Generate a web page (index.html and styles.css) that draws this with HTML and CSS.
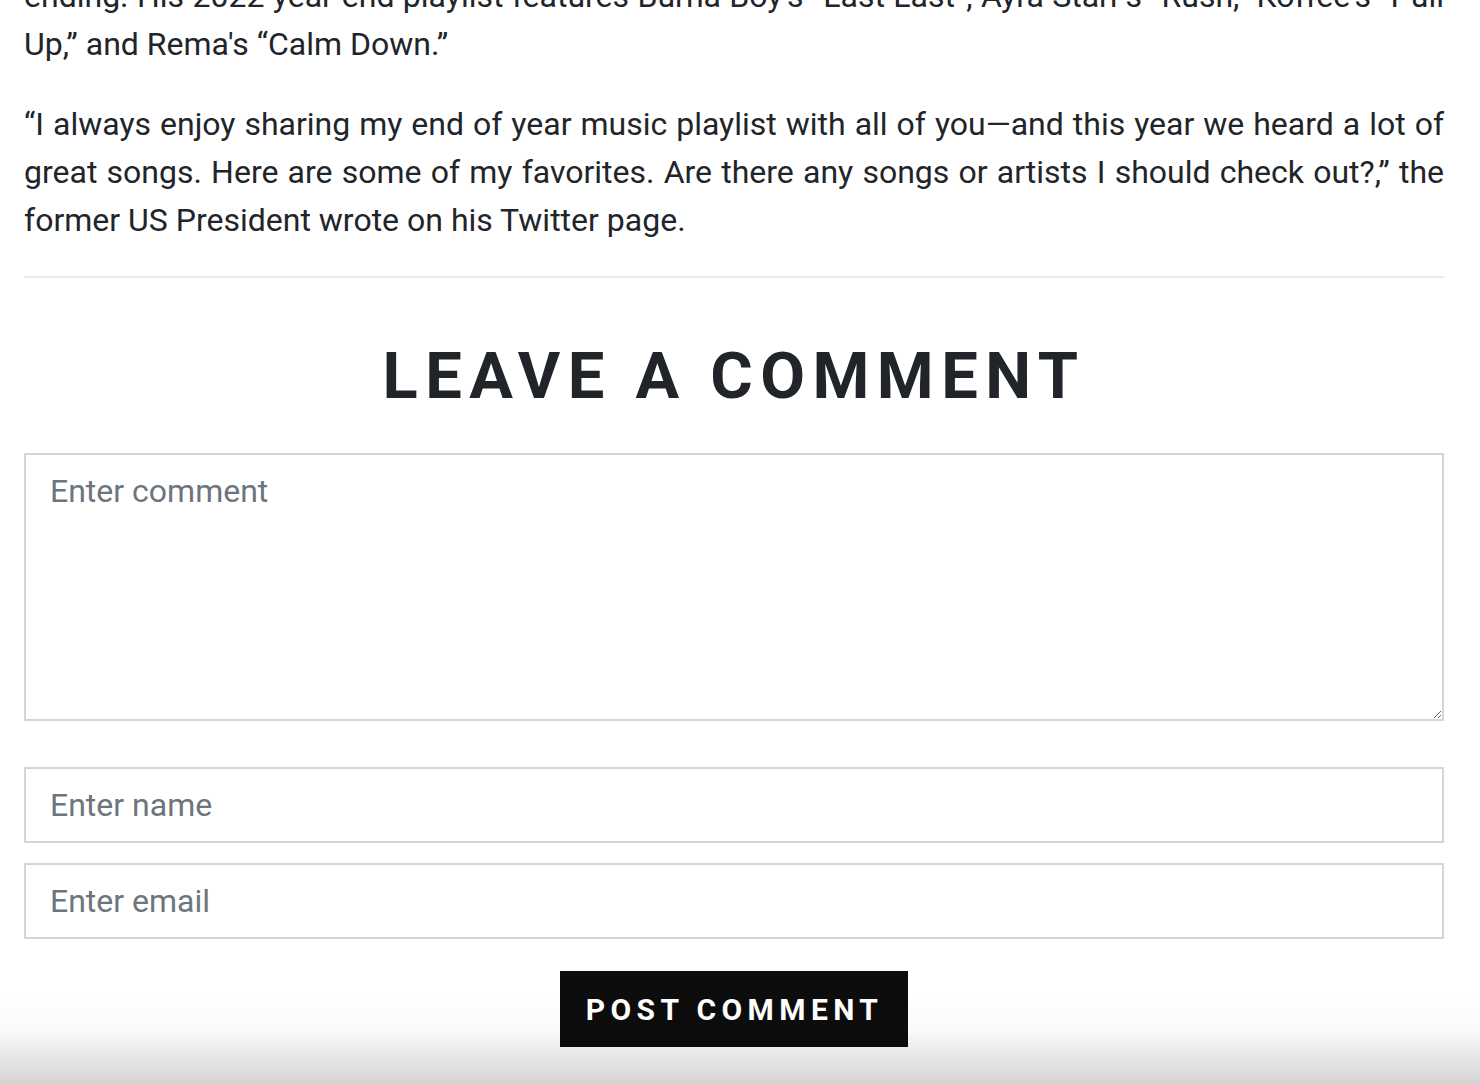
FILE: index.html
```html
<!DOCTYPE html>
<html lang="en">
<head>
<meta charset="utf-8">
<title>Leave a comment</title>
<link rel="stylesheet" href="styles.css">
</head>
<body>
<main class="article">
  <div class="article-body">
    <p>ending. His 2022 year-end playlist features Burna Boy's “Last Last”, Ayra Starr's “Rush,” Koffee's “Pull Up,” and Rema's “Calm Down.”</p>
    <p>“I always enjoy sharing my end of year music playlist with all of you—and this year we heard a lot of great songs. Here are some of my favorites. Are there any songs or artists I should check out?,” the former US President wrote on his Twitter page.</p>
  </div>
  <hr class="divider">
  <section class="comments">
    <h2 class="comments-title">LEAVE A COMMENT</h2>
    <form class="comment-form">
      <textarea class="field field-area" placeholder="Enter comment"></textarea>
      <div class="field-group">
        <input class="field" type="text" placeholder="Enter name">
        <input class="field" type="email" placeholder="Enter email">
      </div>
      <div class="actions">
        <button class="btn-post" type="button">POST COMMENT</button>
      </div>
    </form>
  </section>
</main>
<div class="bottom-fade"></div>
</body>
</html>
```

FILE: styles.css
```css
html, body {
  margin: 0;
  padding: 0;
  background: #ffffff;
}
body {
  font-family: Roboto, "Liberation Sans", Arial, sans-serif;
  color: #212529;
  overflow: hidden;
}
.article {
  padding: 0 36px 0 24px;
  margin-top: -28px;
}
.article-body p {
  font-size: 32px;
  line-height: 48px;
  margin: 0 0 32px 0;
  text-align: justify;
}
.article-body p:last-child {
  margin-bottom: 0;
}
.divider {
  border: 0;
  border-top: 2px solid #e9ecef;
  margin: 32px 0 0 0;
}
.comments-title {
  text-align: center;
  font-size: 65px;
  font-weight: 700;
  letter-spacing: 0.115em;
  line-height: 77px;
  margin: 60px 0 38px 0;
  color: #212529;
}
.comment-form {
  display: flex;
  flex-direction: column;
}
.field {
  display: block;
  width: 100%;
  box-sizing: border-box;
  border: 2px solid #d3d7db;
  border-radius: 0;
  background: #fff;
  font-family: Roboto, "Liberation Sans", Arial, sans-serif;
  font-size: 32px;
  color: #212529;
  padding: 0 24px;
  height: 76px;
  margin: 0;
  outline: none;
}
.field::placeholder {
  color: #6c757d;
  opacity: 1;
}
.field-area {
  height: 268px;
  padding-top: 16px;
  resize: vertical;
  line-height: 40px;
}
.field-group {
  display: flex;
  flex-direction: column;
  gap: 20px;
  margin-top: 46px;
}
.actions {
  display: flex;
  justify-content: center;
  margin-top: 32px;
}
.btn-post {
  background: #0d0d0d;
  color: #ffffff;
  border: 1px solid #0d0d0d;
  border-radius: 0;
  font-family: Roboto, "Liberation Sans", Arial, sans-serif;
  font-weight: 700;
  font-size: 30px;
  letter-spacing: 0.18em;
  height: 76px;
  padding: 0 24px 0 25px;
  cursor: pointer;
}
.bottom-fade {
  position: fixed;
  left: 0;
  right: 0;
  bottom: 0;
  height: 90px;
  background: linear-gradient(to bottom, rgba(0,0,0,0) 0%, rgba(0,0,0,0.02) 40%, rgba(0,0,0,0.17) 100%);
  pointer-events: none;
}
```
